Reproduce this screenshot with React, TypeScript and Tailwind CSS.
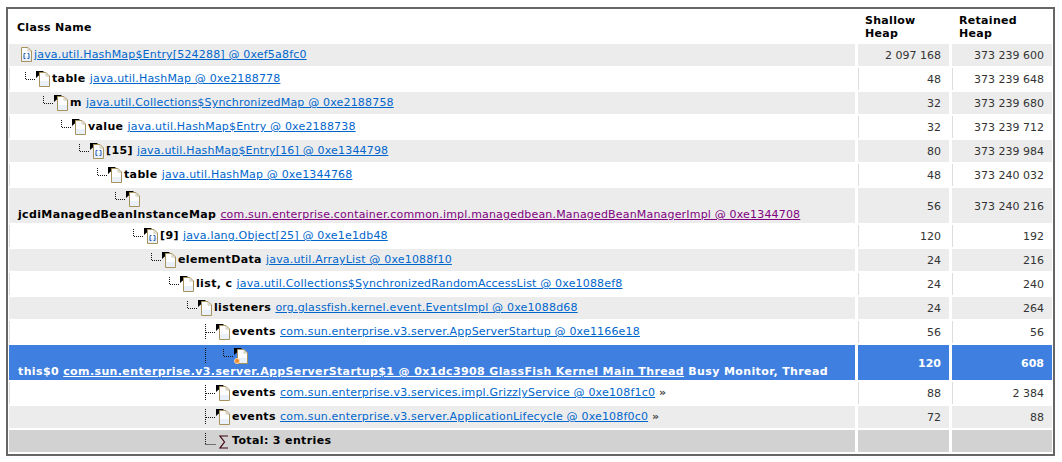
type Kind = 'doc' | 'array' | 'busy';

interface Item {
  level: number;
  kind: Kind;
  name?: string;
  link: string;
  branch?: boolean;
  visited?: boolean;
  more?: boolean;
  tall?: boolean;
  shallow: string;
  retained: string;
}

const items: Item[] = [
  { level: 0, kind: 'array', link: 'java.util.HashMap$Entry[524288] @ 0xef5a8fc0', shallow: '2 097 168', retained: '373 239 600' },
  { level: 1, kind: 'doc', name: 'table', link: 'java.util.HashMap @ 0xe2188778', shallow: '48', retained: '373 239 648' },
  { level: 2, kind: 'doc', name: 'm', link: 'java.util.Collections$SynchronizedMap @ 0xe2188758', shallow: '32', retained: '373 239 680' },
  { level: 3, kind: 'doc', name: 'value', link: 'java.util.HashMap$Entry @ 0xe2188738', shallow: '32', retained: '373 239 712' },
  { level: 4, kind: 'array', name: '[15]', link: 'java.util.HashMap$Entry[16] @ 0xe1344798', shallow: '80', retained: '373 239 984' },
  { level: 5, kind: 'doc', name: 'table', link: 'java.util.HashMap @ 0xe1344768', shallow: '48', retained: '373 240 032' },
  { level: 6, kind: 'doc', name: 'jcdiManagedBeanInstanceMap', link: 'com.sun.enterprise.container.common.impl.managedbean.ManagedBeanManagerImpl @ 0xe1344708', visited: true, tall: true, shallow: '56', retained: '373 240 216' },
  { level: 7, kind: 'array', name: '[9]', link: 'java.lang.Object[25] @ 0xe1e1db48', shallow: '120', retained: '192' },
  { level: 8, kind: 'doc', name: 'elementData', link: 'java.util.ArrayList @ 0xe1088f10', shallow: '24', retained: '216' },
  { level: 9, kind: 'doc', name: 'list, c', link: 'java.util.Collections$SynchronizedRandomAccessList @ 0xe1088ef8', shallow: '24', retained: '240' },
  { level: 10, kind: 'doc', name: 'listeners', link: 'org.glassfish.kernel.event.EventsImpl @ 0xe1088d68', shallow: '24', retained: '264' },
  { level: 11, kind: 'doc', branch: true, name: 'events', link: 'com.sun.enterprise.v3.server.AppServerStartup @ 0xe1166e18', shallow: '56', retained: '56' },
];

const tail: Item[] = [
  { level: 11, kind: 'doc', branch: true, name: 'events', link: 'com.sun.enterprise.v3.services.impl.GrizzlyService @ 0xe108f1c0', more: true, shallow: '88', retained: '2 384' },
  { level: 11, kind: 'doc', branch: true, name: 'events', link: 'com.sun.enterprise.v3.server.ApplicationLifecycle @ 0xe108f0c0', more: true, shallow: '72', retained: '88' },
];

function Doc({ kind, x, y }: { kind: Kind; x: number; y: number }) {
  return (
    <g transform={`translate(${x} ${y})`}>
      <path d="M0.5 0.5H7L10.5 4V14.5H0.5Z" fill="#eaf0fa" stroke="#a8925c" />
      <path d="M1 1H6.5V5H10V9H1Z" fill="#fdfdff" />
      <path d="M7 1V4H10" fill="none" stroke="#d8ccac" />
      {kind === 'array' && (
        <path d="M4.5 6.5H3V11.5H4.5M6.5 6.5H8V11.5H6.5" fill="none" stroke="#1f5fb4" />
      )}
    </g>
  );
}

function NodeIcon({ kind, branch, cont }: { kind: Kind; branch?: boolean; cont?: boolean }) {
  // cont adds a sibling line 18px to the left of the elbow
  const dx = cont ? 18 : 0;
  return (
    <svg width={25 + dx} height={16} className="shrink-0">
      {cont && <line x1="0.5" y1="0" x2="0.5" y2="15" stroke="#111" strokeDasharray="1 1" />}
      <path d={`M${dx + 0.5} ${branch ? 15 : 8}V0`} stroke="#111" strokeDasharray="1 1" fill="none" />
      <line x1={dx + 1} y1="8.5" x2={dx + 11} y2="8.5" stroke="#111" strokeDasharray="1 1" />
      <path d={`M${dx + 11} 0H${dx + 19}L${dx + 11} 7Z`} fill="#000" />
      <Doc kind={kind} x={dx + 14} y={1} />
      {kind === 'busy' && <circle cx={dx + 14} cy="13" r="2.5" fill="#f08a30" stroke="#fbd9a8" />}
    </svg>
  );
}

function Numbers({ shallow, retained, color = 'text-[#333333]', bg, tall }: { shallow?: string; retained?: string; color?: string; bg: string; tall?: boolean }) {
  const top = tall ? 'pt-[4px]' : 'pt-[2px]';
  return (
    <>
      <div className={`${bg} ${color} ${top} w-[91px] shrink-0 flex items-center justify-end pr-2`}>{shallow}</div>
      <div className={`${bg} ${color} ${top} w-[100px] shrink-0 flex items-center justify-end pr-2`}>{retained}</div>
    </>
  );
}

function TreeRow({ item, striped }: { item: Item; striped: boolean }) {
  const bg = striped ? 'bg-[#ececec]' : 'bg-white border-l border-[#dddddd]';
  const pad = item.level === 0 ? 3 : 7 + 18 * (item.level - 1);
  return (
    <div className={`flex gap-[3px] ${item.tall ? 'h-[35px]' : 'h-[22px]'}`}>
      <div className={`${bg} w-[846px] shrink-0 ${striped ? 'pl-[9px]' : 'pl-[8px]'} flex flex-wrap items-start content-start pt-[3px]`}>
        <div className="flex shrink-0 h-4" style={{ paddingLeft: pad }}>
          {item.level === 0 ? (
            <svg width={11} height={16} className="shrink-0">
              <Doc kind="array" x={0} y={0} />
            </svg>
          ) : (
            <NodeIcon kind={item.kind} branch={item.branch} />
          )}
        </div>
        <div className={`whitespace-nowrap ${item.tall ? 'leading-[15px]' : 'ml-[2px] leading-[16px]'}`}>
          {item.name && <b className="text-black tracking-[0.35px]">{item.name} </b>}
          <a className={`underline tracking-[0.18px] ${item.visited ? 'text-[#800080]' : 'text-[#0066cc]'}`}>{item.link}</a>
          {item.more && <b className="text-[#444444]"> »</b>}
        </div>
      </div>
      <Numbers shallow={item.shallow} retained={item.retained} bg={bg} tall={item.tall} />
    </div>
  );
}

export default function App() {
  return (
    <div className="bg-white w-[1062px] h-[462px] pt-[7px] pl-[6px] font-['DejaVu_Sans','Verdana',sans-serif] text-[11px]">
      <div className="w-[1049px] h-[449px] border-2 border-[#666666] pl-px">
        <div className="flex gap-[3px] h-[33px] mb-[2px] font-bold text-black leading-[13px] tracking-[0.3px]">
          <div className="w-[846px] pl-2 pt-3">Class Name</div>
          <div className="w-[91px] pl-[7px] pt-[5px]">Shallow<br />Heap</div>
          <div className="w-[100px] pl-[7px] pt-[5px]">Retained<br />Heap</div>
        </div>
        <div className="flex flex-col gap-[2px]">
          {items.map((item, i) => (
            <TreeRow key={i} item={item} striped={i % 2 === 0} />
          ))}

          <div className="flex gap-[3px] h-[35px] text-white font-bold">
            <div className="bg-[#3f7fdf] w-[846px] pl-[9px] pt-[3px]">
              <div className="h-4 pl-[187px] flex">
                <NodeIcon kind="busy" cont />
              </div>
              <div className="whitespace-nowrap leading-[15px] tracking-[0.38px]">
                this$0 <a className="underline">com.sun.enterprise.v3.server.AppServerStartup$1 @ 0x1dc3908 GlassFish Kernel Main Thread</a> Busy Monitor, Thread
              </div>
            </div>
            <Numbers shallow="120" retained="608" color="text-white" bg="bg-[#3f7fdf]" tall />
          </div>

          {tail.map((item, i) => (
            <TreeRow key={i} item={item} striped={i % 2 === 1} />
          ))}

          <div className="flex gap-[3px] h-[22px] font-bold text-black">
            <div className="bg-[#d2d2d2] w-[846px] pl-[196px] flex items-center">
              <svg width={24} height={18} className="shrink-0">
                <path d="M0.5 1V12M0.5 12.5H11" stroke="#111" strokeDasharray="1 1" fill="none" />
                <path d="M23 4H15L19.5 10L15 16H23" stroke="#400010" strokeWidth="1.2" fill="none" />
              </svg>
              <span className="ml-[3px] tracking-[0.37px]">Total: 3 entries</span>
            </div>
            <Numbers bg="bg-[#d2d2d2]" />
          </div>
        </div>
      </div>
    </div>
  );
}
